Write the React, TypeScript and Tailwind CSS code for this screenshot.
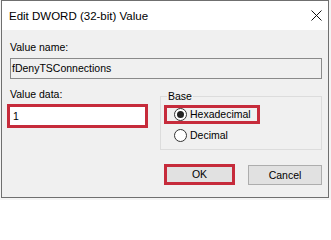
import React from 'react';

const RED = 'border-[#c62b3b]';

function Radio({ checked }: { checked: boolean }) {
  return (
    <span className="w-[13px] h-[13px] rounded-full border border-[#333333] bg-white flex items-center justify-center shrink-0">
      {checked && <span className="w-[7px] h-[7px] rounded-full bg-[#222222]" />}
    </span>
  );
}

export default function App() {
  return (
    <div className="w-[331px] h-[200px] bg-[#f4f4f4] overflow-hidden font-['Liberation_Sans',Arial,sans-serif] text-black">
      <div className="ml-px w-[328px] h-[198px] border border-[#6f6f6f]">
        {/* title bar */}
        <div className="h-[29px] bg-white flex items-center justify-between pl-[7px] pr-[6px] pt-[1px]">
          <span className="text-[11.5px] leading-[14px]">Edit DWORD (32-bit) Value</span>
          <svg width="11" height="11" viewBox="0 0 11 11" className="mt-[-1px]">
            <path d="M0.5 0.5 L10.5 10.5 M10.5 0.5 L0.5 10.5" stroke="#111" strokeWidth="1" fill="none" />
          </svg>
        </div>

        {/* body */}
        <div className="h-[167px] bg-[#f0f0f0] text-[10.5px] leading-[13px] flow-root">
          <div className="pl-[8px] pt-[11px]">Value name:</div>
          <div className="ml-[8px] mt-[4px] w-[312px] h-[21px] border border-[#8a8a8a] bg-[#f0f0f0] flex items-center pl-[1px]">
            fDenyTSConnections
          </div>

          <div className="flex pl-[5px]">
            <div className="w-[141px] shrink-0">
              <div className="ml-[3px] mt-[9px]">Value data:</div>
              <div className={`mt-[3px] h-[24px] border-[3px] ${RED} bg-white flex items-center pl-[3px]`}>1</div>
            </div>

            <fieldset className="ml-[12px] mt-[11px] w-[162px] h-[60px] border border-[#dcdcdc] px-0 pb-0">
              <legend className="ml-[6px] px-[1px] leading-[12px]">Base</legend>
              <div className={`ml-[3px] mt-[3px] w-[96px] h-[19px] border-[3px] ${RED} flex items-center pl-[7px] gap-[3px]`}>
                <Radio checked />
                <span>Hexadecimal</span>
              </div>
              <div className="ml-[3px] mt-[2px] w-[96px] h-[19px] border-[3px] border-transparent flex items-center pl-[7px] gap-[3px]">
                <Radio checked={false} />
                <span>Decimal</span>
              </div>
            </fieldset>
          </div>

          <div className="flex justify-end gap-[13px] pr-[6px] mt-[14px]">
            <button className={`w-[71px] h-[21px] border-[3px] ${RED} bg-[#e1e1e1] flex items-center justify-center`}>OK</button>
            <button className="w-[74px] h-[20px] mt-[1px] border border-[#adadad] bg-[#e1e1e1] flex items-center justify-center">
              Cancel
            </button>
          </div>
        </div>
      </div>
    </div>
  );
}
